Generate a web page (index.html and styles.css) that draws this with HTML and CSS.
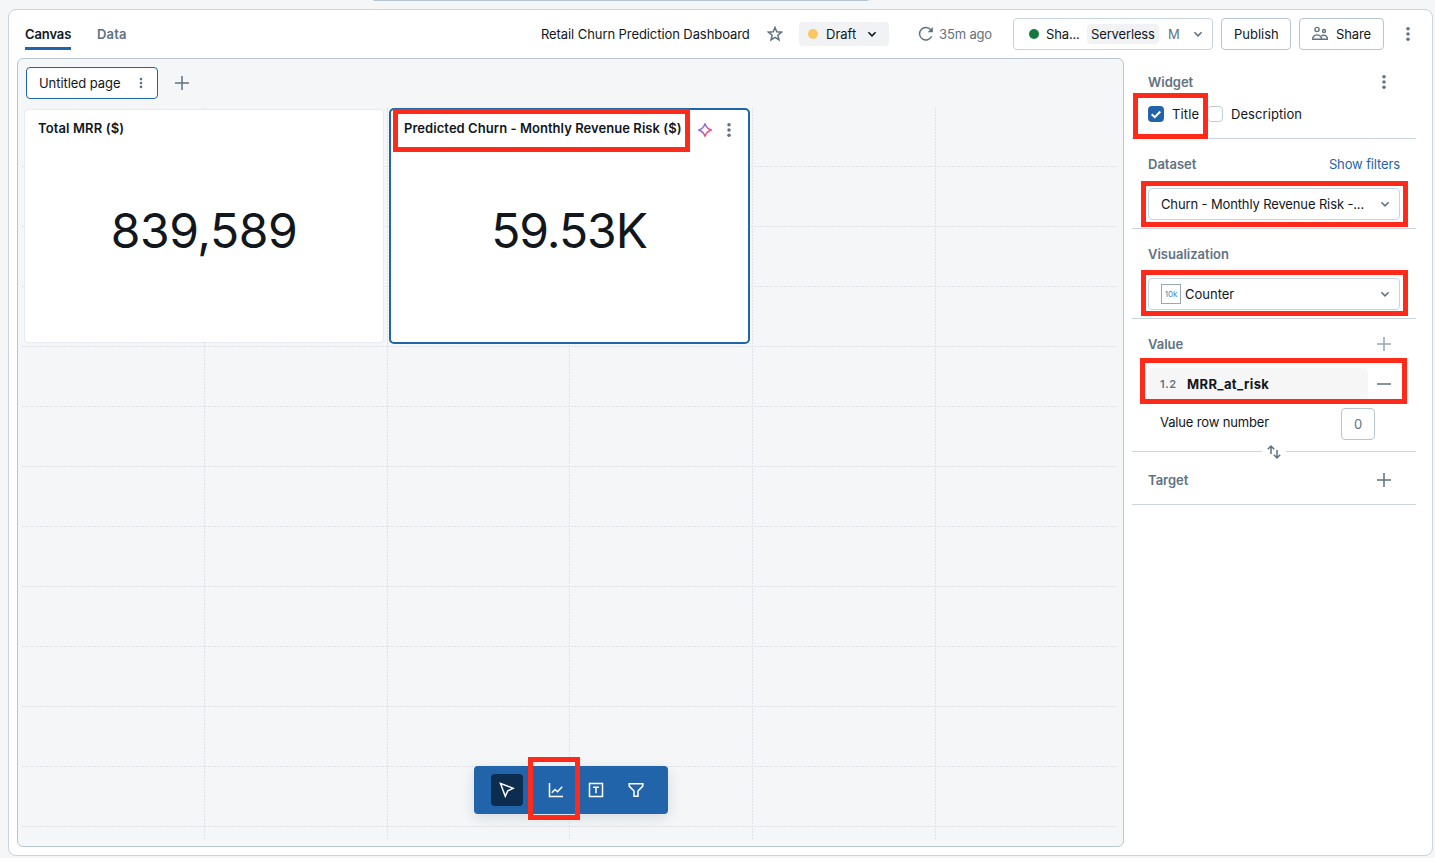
FILE: index.html
```html
<!DOCTYPE html>
<html lang="en">
<head>
<meta charset="utf-8">
<title>Retail Churn Prediction Dashboard</title>
<link rel="stylesheet" href="styles.css">
</head>
<body>
<svg width="0" height="0" class="defs">
  <defs>
    <symbol id="kebab" viewBox="0 0 16 16"><circle cx="8" cy="2.8" r="1.75"/><circle cx="8" cy="8" r="1.75"/><circle cx="8" cy="13.2" r="1.75"/></symbol>
    <symbol id="chevron" viewBox="0 0 16 16"><path d="M4.4 6.2 8 9.8l3.6-3.6" fill="none" stroke="currentColor" stroke-width="1.6"/></symbol>
    <symbol id="plus" viewBox="0 0 16 16"><path d="M8 1v14M1 8h14" fill="none" stroke="currentColor" stroke-width="1.5"/></symbol>
  </defs>
</svg>
<div class="top-strip"></div>
<div class="shell">
  <header class="header">
    <nav class="tabs">
      <a class="tab active"><span class="t-canvas">Canvas</span></a>
      <a class="tab"><span class="t-data">Data</span></a>
    </nav>
    <div class="tools">
      <span class="title t-dash">Retail Churn Prediction Dashboard</span>
      <svg class="icon star" viewBox="0 0 16 16"><path d="M8 1.5l1.75 4.35 4.75.35-3.65 3 1.15 4.6L8 11.3l-4 2.5 1.15-4.6-3.65-3 4.75-.35z" fill="none" stroke="currentColor" stroke-width="1.5"/></svg>
      <div class="draft"><i class="dot yellow"></i><span class="t-draft">Draft</span><svg class="icon"><use href="#chevron"/></svg></div>
      <div class="refresh"><svg class="icon" viewBox="0 0 16 16"><path d="M13.6 10.3A6.3 6.3 0 1 1 12.8 3.8" fill="none" stroke="currentColor" stroke-width="1.5"/><path d="M14.900 1v5.200H9.700z" fill="currentColor"/></svg><span class="t-ago">35m ago</span></div>
      <div class="compute"><i class="dot green"></i><span class="t-sha">Sha...</span><span class="badge"><span class="t-srv">Serverless</span></span><span class="size">M</span><svg class="icon"><use href="#chevron"/></svg></div>
      <div class="btn publish"><span class="t-pub">Publish</span></div>
      <div class="btn share"><svg class="icon" viewBox="0 0 16 16"><g fill="none" stroke="currentColor" stroke-width="1.4"><circle cx="5" cy="3.500" r="2.100"/><circle cx="12" cy="5" r="1.500"/><path d="M.8 13.300v-1.600C1.800 9.600 3.300 8.900 5 8.900s3.300.7 4.400 2.800v1.600zM9.400 9.800c2.500-1.300 5-.4 5.900 2v1.500H9.400"/></g></svg><span class="t-share">Share</span></div>
      <svg class="icon kebab"><use href="#kebab"/></svg>
    </div>
  </header>
  <main class="main">
    <section class="canvas">
      <div class="pages">
        <div class="page-tab"><span class="t-page">Untitled page</span><svg class="icon small"><use href="#kebab"/></svg></div>
        <svg class="icon add"><use href="#plus"/></svg>
      </div>
      <div class="board">
        <svg class="grid" width="1096" height="732" viewBox="0 0 1096 732">
          <path d="M182.5 0v732M365.5 0v732M547.5 0v732M730.5 0v732M913.5 0v732"/>
          <path d="M0 58.5h1096M0 118.5h1096M0 178.5h1096M0 238.5h1096M0 298.5h1096M0 358.5h1096M0 418.5h1096M0 478.5h1096M0 538.5h1096M0 598.5h1096M0 658.5h1096M0 718.5h1096"/>
        </svg>
        <div class="cards">
          <article class="card">
            <div class="card-head"><h2 class="t-total">Total MRR ($)</h2></div>
            <div class="number"><span class="t-n1">839,589</span></div>
          </article>
          <article class="card selected">
            <div class="card-head"><h2 class="t-churn">Predicted Churn - Monthly Revenue Risk ($)</h2>
              <svg class="icon spark" viewBox="0 0 16 16"><defs><linearGradient id="sg" x1="0" y1="0" x2="1" y2="1"><stop offset=".15" stop-color="#4299e0"/><stop offset=".5" stop-color="#ca42e0"/><stop offset=".8" stop-color="#ff5f46"/></linearGradient></defs><path d="M8 1.700Q9.500 6.500 14.300 8 9.500 9.500 8 14.300 6.500 9.500 1.700 8 6.500 6.500 8 1.700z" fill="none" stroke="url(#sg)" stroke-width="1.500" stroke-linejoin="round"/></svg>
              <svg class="icon"><use href="#kebab"/></svg></div>
            <div class="number"><span class="t-n2">59.53K</span></div>
          </article>
        </div>
        <div class="toolbar">
          <span class="tool on"><svg class="icon" viewBox="0 0 16 16"><path d="M1.500 1.500 14.300 6.300 8.800 8.800 6.300 14.300z" fill="none" stroke="currentColor" stroke-width="1.500"/></svg></span>
          <span class="tool"><svg class="icon" viewBox="0 0 16 16"><path d="M1.500 1v13.500H15M3.800 10.700 7 7.500l2.500 2.200 4.700-5" fill="none" stroke="currentColor" stroke-width="1.500"/></svg></span>
          <span class="tool"><svg class="icon" viewBox="0 0 16 16"><path d="M1.500 1.500h13v13h-13zM5 5.300h6M8 5.300v6" fill="none" stroke="currentColor" stroke-width="1.500"/></svg></span>
          <span class="tool"><svg class="icon" viewBox="0 0 16 16"><path d="M1.200 1.700h13.600v2.400L10 9v5.300H6V9L1.200 4.100z" fill="none" stroke="currentColor" stroke-width="1.500"/></svg></span>
        </div>
      </div>
    </section>
    <aside class="side">
      <section class="sec widget">
        <div class="row"><h3 class="t-widget">Widget</h3><svg class="icon end"><use href="#kebab"/></svg></div>
        <div class="row checks">
          <i class="box checked"><svg viewBox="0 0 16 16"><path d="M3.700 8.200 6.800 11.200 12.300 5.500" fill="none" stroke="#fff" stroke-width="2"/></svg></i><span class="lbl-title"><span class="t-title">Title</span></span>
          <i class="box"></i><span class="t-desc">Description</span>
        </div>
      </section>
      <section class="sec">
        <div class="row"><h3 class="t-dataset">Dataset</h3><a class="link t-filters">Show filters</a></div>
        <div class="select"><span class="t-ds">Churn - Monthly Revenue Risk -...</span><svg class="icon"><use href="#chevron"/></svg></div>
      </section>
      <section class="sec">
        <div class="row"><h3 class="t-vis">Visualization</h3></div>
        <div class="select"><i class="tenk">10k</i><span class="t-counter">Counter</span><svg class="icon"><use href="#chevron"/></svg></div>
      </section>
      <section class="sec value">
        <div class="row"><h3 class="t-value">Value</h3><svg class="icon end pale"><use href="#plus"/></svg></div>
        <div class="row field"><div class="pill"><small>1.2</small><b class="t-mrr">MRR_at_risk</b></div><svg class="icon end minus" viewBox="0 0 16 16"><path d="M1 8h14" stroke="currentColor" stroke-width="1.500"/></svg></div>
        <div class="rownum"><span class="t-rownum">Value row number</span><span class="num">0</span></div>
        <svg class="swap" viewBox="0 0 16 16"><path d="M5 10V2.500M1.800 5.200 5 2l3.200 3.200M11 6v7.500M7.800 10.800 11 14l3.200-3.200" fill="none" stroke="currentColor" stroke-width="1.500"/></svg>
      </section>
      <section class="sec target">
        <div class="row"><h3 class="t-target">Target</h3><svg class="icon end"><use href="#plus"/></svg></div>
      </section>
    </aside>
  </main>
</div>
<div class="mark m-name"></div>
<div class="mark m-title"></div>
<div class="mark m-dataset"></div>
<div class="mark m-vis"></div>
<div class="mark m-value"></div>
<div class="mark m-tool"></div>
</body>
</html>
```
FILE: styles.css
```css
* { box-sizing: border-box; }
body {
  margin: 0; width: 1435px; height: 858px; overflow: hidden; position: relative;
  background: #f4f6f8; color: #11171c;
  font: 13px/20px Inter, "Liberation Sans", sans-serif;
  padding: 9px 2px 2px 8px;
}
.defs { position: absolute; }
.top-strip { position: absolute; left: 372px; top: -5px; width: 498px; height: 6px; border: 1px solid #b4c4d0; border-radius: 4px; }
.shell { height: 847px; background: #fff; border: 1px solid #cad5dd; border-radius: 8px; }
.icon { width: 16px; height: 16px; flex: none; fill: currentColor; color: #5f7281; display: block; }
span, h2, h3, b { white-space: nowrap; }
h2, h3 { margin: 0; font-size: 13px; font-weight: 600; }
i { font-style: normal; }

.header { display: flex; justify-content: space-between; height: 48px; padding: 0 16px; }
.tabs { display: flex; gap: 26px; }
.tab { padding-top: 14px; height: 40px; font-weight: 600; color: #5f7281; }
.tab.active { color: #11171c; border-bottom: 3px solid #2264aa; width: 46px; }
.t-canvas { letter-spacing: -.12px; }
.t-data { letter-spacing: .15px; }
.tools { display: flex; align-items: center; }
.title { width: 209px; letter-spacing: -.08px; }
.star { margin-left: 17px; }
.draft { display: flex; align-items: center; width: 90px; height: 24px; margin-left: 16px; padding-left: 9px; border-radius: 4px; background: #f1f2f4; }
.draft span { width: 31px; margin-left: 8px; }
.draft .icon { margin-left: 7px; color: #11171c; }
.dot { width: 10px; height: 10px; border-radius: 50%; flex: none; }
.yellow { background: #f8c662; }
.green { background: #167840; }
.refresh { display: flex; align-items: center; width: 75px; margin-left: 29px; gap: 5px; color: #5f7281; letter-spacing: -.15px; }
.compute { display: flex; align-items: center; width: 200px; height: 32px; margin-left: 20px; padding-left: 15px; border: 1px solid #c8d4dd; border-radius: 4px; }
.compute > .t-sha { width: 33px; margin-left: 7px; letter-spacing: -.15px; }
.badge { width: 72px; height: 20px; margin-left: 8px; padding-left: 4px; border-radius: 4px; background: #f1f2f4; letter-spacing: -.14px; }
.size { width: 12px; margin-left: 9px; color: #5f7281; }
.compute .icon { margin-left: 10px; }
.btn { display: flex; align-items: center; height: 32px; margin-left: 8px; padding-left: 12px; border: 1px solid #b6c5d0; border-radius: 4px; }
.publish { width: 70px; }
.share { width: 85px; gap: 8px; letter-spacing: -.1px; }
.kebab { margin-left: 16px; }

.main { display: flex; gap: 8px; padding-left: 8px; }
.canvas { width: 1107px; height: 789px; border: 1px solid #b8c6d0; border-radius: 6px; background: #f4f6f8; }
.pages { display: flex; align-items: flex-start; height: 49px; padding: 8px 0 0 8px; }
.page-tab { display: flex; align-items: center; justify-content: space-between; width: 132px; height: 32px; padding: 0 10px 0 12px; border: 1px solid #2264aa; border-radius: 4px; background: #fff; letter-spacing: -.06px; }
.small { width: 12px; height: 12px; }
.add { margin: 8px 0 0 16px; }
.board { position: relative; height: 732px; margin-left: 4px; width: 1096px; }
.grid { position: absolute; left: 0; top: 0; }
.grid path { fill: none; stroke: #dfe3e7; stroke-width: 1; stroke-dasharray: 2 1; }
.cards { position: relative; display: flex; align-items: flex-start; gap: 5px; padding-left: 2px; }
.card { width: 360px; height: 234px; margin-top: 1px; border: 1px solid #e6eaed; border-radius: 4px; background: #fff; padding: 0 13px; }
.card.selected { width: 361px; height: 236px; margin-top: 0; border: 2px solid #2264aa; border-radius: 5px; }
.card-head { display: flex; align-items: center; height: 37px; }
.selected .card-head { height: 40px; }
.card-head h2 { margin-top: -2px; letter-spacing: .12px; }
.selected h2 { width: 278px; margin-top: -5px; letter-spacing: .055px; }
.spark { margin: 0 8px 0 15px; }
.number { display: flex; justify-content: center; height: 162px; align-items: center; font-size: 48px; line-height: 60px; padding-right: 1px; }
.card:not(.selected) .number { height: 168px; padding: 0; }
.t-n1 { letter-spacing: -.45px; }
.t-n2 { letter-spacing: -1.05px; }
.toolbar { position: absolute; left: 452px; top: 658px; width: 194px; height: 48px; padding: 8px 16px 8px 17px; display: flex; gap: 8px; border-radius: 4px; background: #2264aa; box-shadow: 0 4px 14px rgba(20,40,60,.13); }
.tool { width: 32px; height: 32px; border-radius: 4px; display: flex; align-items: center; justify-content: center; }
.tool .icon { color: #fff; }
.tool.on { background: #0c2d50; margin-right: 9px; }

.side { width: 284px; }
.sec { height: 90px; padding: 15px 16px 0; border-bottom: 1px solid #cad5dd; }
.row { display: flex; align-items: center; height: 20px; }
h3 { color: #5f7281; }
.end { margin-left: auto; margin-right: 8px; }
.widget { height: 81px; padding-top: 14px; }
.checks { margin-top: 12px; }
.box { width: 16px; height: 16px; margin-right: 8px; border: 1px solid #c0cdd8; border-radius: 4px; }
.box.checked { background: #2264aa; border: 0; }
.box svg { display: block; }
.lbl-title { width: 35px; letter-spacing: .15px; }
.t-desc { letter-spacing: .07px; }
.link { margin-left: auto; color: #2264aa; white-space: nowrap; letter-spacing: -.13px; }
.select { display: flex; align-items: center; height: 32px; margin-top: 14px; padding: 0 6px 0 12px; border: 1px solid #c8d4dd; border-radius: 4px; }
.select .icon { margin-left: auto; }
.t-ds { letter-spacing: -.13px; }
.tenk { width: 20px; height: 20px; margin-right: 4px; border: 1px solid #9aa8b3; color: #3b8bc8; font-size: 8px; line-height: 18px; text-align: center; }
.value { position: relative; height: 133px; }
.pale { color: #95a5b3; }
.field { height: 32px; margin-top: 14px; }
.pill { width: 220px; height: 32px; padding-left: 12px; border-radius: 4px; background: #f6f6f7; display: flex; align-items: center; gap: 10px; }
.pill small { width: 17px; font-size: 11px; font-weight: 600; letter-spacing: .6px; color: #5f7281; }
.pill b { font-weight: 700; letter-spacing: .38px; }
.rownum { display: flex; justify-content: space-between; padding: 8px 25px 0 12px; }
.rownum > :first-child { margin-top: 4px; letter-spacing: -.15px; }
.num { width: 34px; height: 32px; border: 1px solid #b6c5d0; border-radius: 4px; text-align: center; line-height: 31px; color: #5f7281; }
.swap { position: absolute; left: 130px; bottom: -9px; width: 24px; height: 16px; background: #fff; color: #5f7281; }
.target { height: 53px; padding-top: 18px; }

.mark { position: absolute; border: 5px solid #ff2a1a; }
.m-name { left: 393px; top: 109px; width: 297px; height: 43px; }
.m-title { left: 1133px; top: 93px; width: 75px; height: 46px; }
.m-dataset { left: 1141px; top: 181px; width: 267px; height: 46px; }
.m-vis { left: 1141px; top: 270px; width: 267px; height: 46px; }
.m-value { left: 1140px; top: 358px; width: 267px; height: 46px; }
.m-tool { left: 528px; top: 757px; width: 52px; height: 63px; }
```
